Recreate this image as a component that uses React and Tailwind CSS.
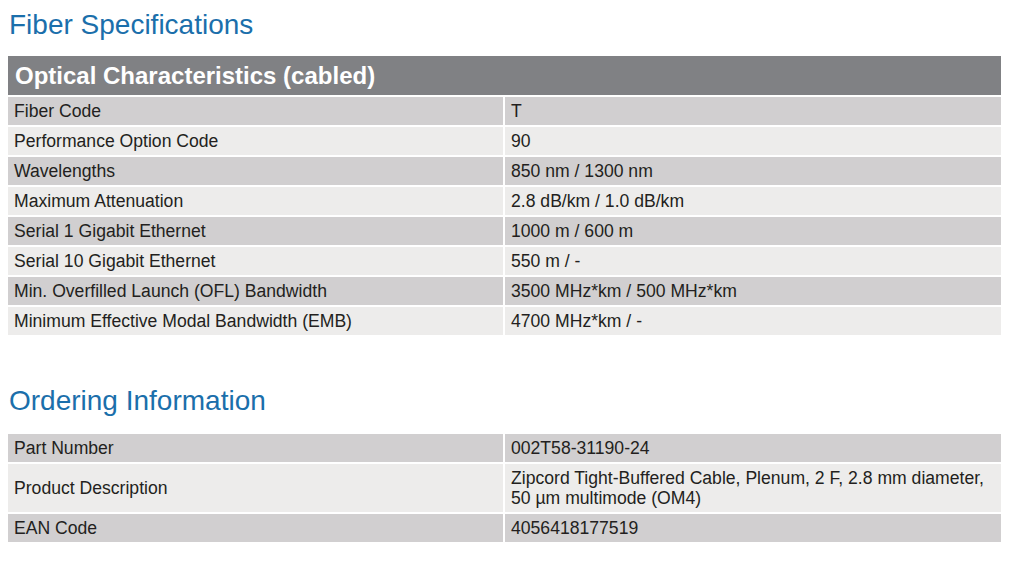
import React from "react";

const specs = [
  ["Fiber Code", "T"],
  ["Performance Option Code", "90"],
  ["Wavelengths", "850 nm / 1300 nm"],
  ["Maximum Attenuation", "2.8 dB/km / 1.0 dB/km"],
  ["Serial 1 Gigabit Ethernet", "1000 m / 600 m"],
  ["Serial 10 Gigabit Ethernet", "550 m / -"],
  ["Min. Overfilled Launch (OFL) Bandwidth", "3500 MHz*km / 500 MHz*km"],
  ["Minimum Effective Modal Bandwidth (EMB)", "4700 MHz*km / -"],
];

const ordering = [
  ["Part Number", "002T58-31190-24"],
  [
    "Product Description",
    "Zipcord Tight-Buffered Cable, Plenum, 2 F, 2.8 mm diameter, 50 µm multimode (OM4)",
  ],
  ["EAN Code", "4056418177519"],
];

const Row = ({ label, value, index }) => {
  const bg = index % 2 === 0 ? "bg-[#d1cfd0]" : "bg-[#edeceb]";
  return (
    <>
      <div className={`${bg} min-h-[28px] px-[6px] flex items-center`}>{label}</div>
      <div className={`${bg} min-h-[28px] px-[6px] py-[4px] flex items-center`}>{value}</div>
    </>
  );
};

const Title = ({ children }) => (
  <h1 className="text-[28px] leading-[32px] text-[#1b6fab] px-[9px]">{children}</h1>
);

export default function App() {
  return (
    <div className="w-[1016px] h-[568px] bg-white text-[#231f20] text-[17.6px] leading-[20px] font-['Liberation_Sans',Arial,sans-serif] pt-[9px]">
      <Title>Fiber Specifications</Title>

      <div className="mx-[8px] w-[993px] mt-[15px]">
        <div className="bg-[#808184] h-[39px] px-[7px] flex items-center text-white font-bold text-[24px]">
          Optical Characteristics (cabled)
        </div>
        <div className="grid grid-cols-[495px_1fr] gap-[2px] mt-[2px]">
          {specs.map(([label, value], i) => (
            <Row key={label} label={label} value={value} index={i} />
          ))}
        </div>
      </div>

      <div className="mt-[50px]">
        <Title>Ordering Information</Title>
      </div>

      <div className="mx-[8px] w-[993px] mt-[17px]">
        <div className="grid grid-cols-[495px_1fr] gap-[2px]">
          {ordering.map(([label, value], i) => (
            <Row key={label} label={label} value={value} index={i} />
          ))}
        </div>
      </div>
    </div>
  );
}
